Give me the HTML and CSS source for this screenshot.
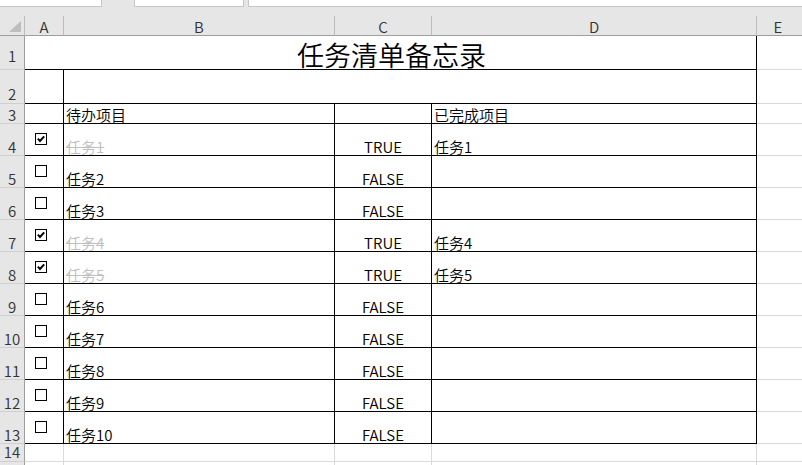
FILE: index.html
```html
<!DOCTYPE html>
<html lang="zh-CN">

<head>
  <meta charset="UTF-8" />
  <title>任务清单备忘录</title>
  <link rel="stylesheet" href="styles.css">
</head>

<body>
  <div class="toolbar">
    <div class="box name-box"></div>
    <div class="box fx-box"></div>
    <div class="box formula-box"></div>
  </div>

  <div class="sheet">
    <!-- column headers -->
    <div class="corner">
      <svg width="12" height="11" viewBox="0 0 12 11"><polygon points="12,0 12,11 0,11" fill="#bdbdbd" /></svg>
    </div>
    <div class="col-head">A</div>
    <div class="col-head">B</div>
    <div class="col-head">C</div>
    <div class="col-head">D</div>
    <div class="col-head col-e">E</div>

    <!-- row 1 -->
    <div class="row-head rh-1">1</div>
    <div class="cell bk title">任务清单备忘录</div>
    <div class="cell"></div>

    <!-- row 2 -->
    <div class="row-head rh-2">2</div>
    <div class="cell bk"></div>
    <div class="cell bk wide"></div>
    <div class="cell"></div>

    <!-- row 3 -->
    <div class="row-head">3</div>
    <div class="cell bk"></div>
    <div class="cell bk">待办项目</div>
    <div class="cell bk"></div>
    <div class="cell bk">已完成项目</div>
    <div class="cell"></div>

    <div class="row-head">4</div>
    <div class="cell bk box-cell"><span class="check on"><svg viewBox="0 0 10 10"><path d="M1.8 4.6 L4 7 L8.2 2.4" /></svg></span></div>
    <div class="cell bk task done">任务1</div>
    <div class="cell bk flag">TRUE</div>
    <div class="cell bk">任务1</div>
    <div class="cell"></div>

    <div class="row-head">5</div>
    <div class="cell bk box-cell"><span class="check"></span></div>
    <div class="cell bk task">任务2</div>
    <div class="cell bk flag">FALSE</div>
    <div class="cell bk"></div>
    <div class="cell"></div>

    <div class="row-head">6</div>
    <div class="cell bk box-cell"><span class="check"></span></div>
    <div class="cell bk task">任务3</div>
    <div class="cell bk flag">FALSE</div>
    <div class="cell bk"></div>
    <div class="cell"></div>

    <div class="row-head">7</div>
    <div class="cell bk box-cell"><span class="check on"><svg viewBox="0 0 10 10"><path d="M1.8 4.6 L4 7 L8.2 2.4" /></svg></span></div>
    <div class="cell bk task done">任务4</div>
    <div class="cell bk flag">TRUE</div>
    <div class="cell bk">任务4</div>
    <div class="cell"></div>

    <div class="row-head">8</div>
    <div class="cell bk box-cell"><span class="check on"><svg viewBox="0 0 10 10"><path d="M1.8 4.6 L4 7 L8.2 2.4" /></svg></span></div>
    <div class="cell bk task done">任务5</div>
    <div class="cell bk flag">TRUE</div>
    <div class="cell bk">任务5</div>
    <div class="cell"></div>

    <div class="row-head">9</div>
    <div class="cell bk box-cell"><span class="check"></span></div>
    <div class="cell bk task">任务6</div>
    <div class="cell bk flag">FALSE</div>
    <div class="cell bk"></div>
    <div class="cell"></div>

    <div class="row-head">10</div>
    <div class="cell bk box-cell"><span class="check"></span></div>
    <div class="cell bk task">任务7</div>
    <div class="cell bk flag">FALSE</div>
    <div class="cell bk"></div>
    <div class="cell"></div>

    <div class="row-head">11</div>
    <div class="cell bk box-cell"><span class="check"></span></div>
    <div class="cell bk task">任务8</div>
    <div class="cell bk flag">FALSE</div>
    <div class="cell bk"></div>
    <div class="cell"></div>

    <div class="row-head">12</div>
    <div class="cell bk box-cell"><span class="check"></span></div>
    <div class="cell bk task">任务9</div>
    <div class="cell bk flag">FALSE</div>
    <div class="cell bk"></div>
    <div class="cell"></div>

    <div class="row-head">13</div>
    <div class="cell bk box-cell"><span class="check"></span></div>
    <div class="cell bk task">任务10</div>
    <div class="cell bk flag">FALSE</div>
    <div class="cell bk"></div>
    <div class="cell"></div>

    <!-- row 14 -->
    <div class="row-head rh-14">14</div>
    <div class="cell"></div>
    <div class="cell"></div>
    <div class="cell"></div>
    <div class="cell"></div>
    <div class="cell"></div>

    <!-- row 15 (cut off) -->
    <div class="row-head"></div>
    <div class="cell"></div>
    <div class="cell"></div>
    <div class="cell"></div>
    <div class="cell"></div>
    <div class="cell"></div>
  </div>
</body>

</html>
```

FILE: styles.css
```css
* {
  box-sizing: border-box;
  margin: 0;
  padding: 0;
}

html,
body {
  overflow: hidden;
}

body {
  background: #fff;
  color: #000;
  font-family: "Noto Sans CJK SC", "Liberation Sans", sans-serif;
  font-size: 15px;
  font-weight: 350;
  width: 802px;
  height: 465px;
}

.toolbar {
  height: 16px;
  background: #e6e6e6;
  display: flex;
  align-items: flex-start;
}

.toolbar .box {
  height: 7px;
  background: #fff;
  border-bottom: 1px solid #c6c6c6;
}

.name-box {
  width: 102px;
  border-right: 1px solid #c6c6c6;
}

.fx-box {
  width: 110px;
  margin-left: 32px;
  margin-right: 4px;
  border-left: 1px solid #c6c6c6;
  border-right: 1px solid #c6c6c6;
}

.formula-box {
  flex: 1;
  border-left: 1px solid #c6c6c6;
}

.sheet {
  display: grid;
  grid-template-columns: 25px 39px 271px 97px 325px 64px;
  grid-template-rows: 20px 34px 34px 20px repeat(10, 32px) 18px 18px;
  width: 821px;
}

.corner,
.col-head {
  background: #e6e6e6;
  border-right: 1px solid #bcbcbc;
  border-bottom: 1px solid #9e9e9e;
}

.corner {
  display: flex;
  justify-content: flex-end;
  align-items: flex-end;
  padding: 0 3px 3px 0;
}

.corner svg {
  display: block;
}

.col-head {
  display: flex;
  justify-content: center;
  align-items: flex-end;
  color: #333;
  line-height: 15px;
  padding-bottom: 1px;
}

.col-head.col-e {
  padding-right: 21px;
}

.row-head {
  background: #e6e6e6;
  border-right: 1px solid #9e9e9e;
  border-bottom: 1px solid #cfcfcf;
  display: flex;
  justify-content: center;
  align-items: flex-end;
  color: #333;
  line-height: 15px;
  padding-bottom: 1px;
}

.rh-1 {
  padding-bottom: 6px;
}

.rh-2,
.rh-14 {
  padding-bottom: 2px;
}

.cell {
  border-right: 1px solid #d9d9d9;
  border-bottom: 1px solid #d9d9d9;
  display: flex;
  align-items: flex-end;
  padding-left: 2px;
  padding-bottom: 1px;
  line-height: 15px;
  white-space: nowrap;
}

.cell.bk {
  border-color: #000;
}

.title {
  grid-column: span 4;
  justify-content: center;
  font-size: 27px;
  line-height: 27px;
}

.wide {
  grid-column: span 3;
}

.done {
  color: #bfbfbf;
  text-decoration: line-through;
}

.flag {
  justify-content: center;
  padding-left: 0;
}

.box-cell {
  align-items: flex-start;
  padding: 9px 0 0 10px;
}

.check {
  display: block;
  width: 12px;
  height: 12px;
  border: 1px solid #000;
  background: #fff;
}

.check svg {
  display: block;
  width: 10px;
  height: 10px;
}

.check path {
  fill: none;
  stroke: #000;
  stroke-width: 1.9;
}
```
